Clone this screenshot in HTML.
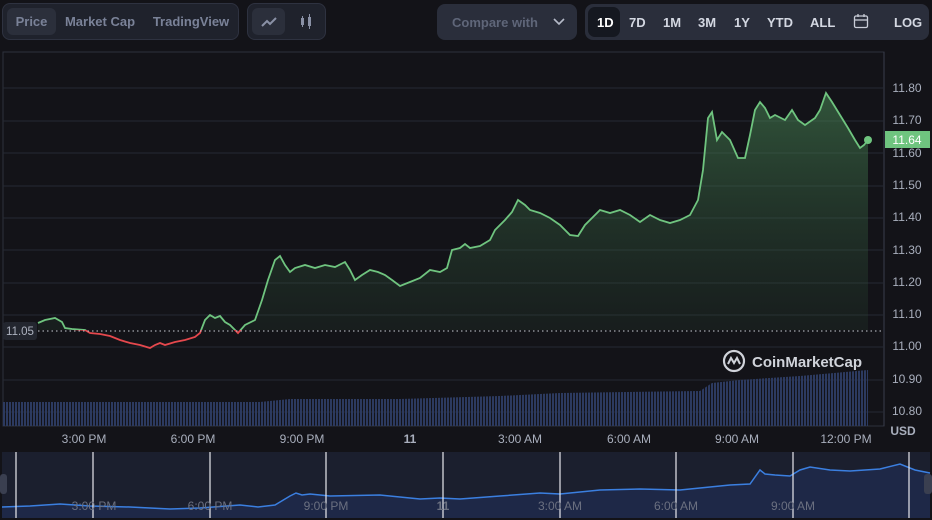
<!DOCTYPE html>
<html><head><meta charset="utf-8"><style>
body{margin:0;width:932px;height:520px;background:#131318;font-family:"Liberation Sans",sans-serif;overflow:hidden;position:relative;color:#a1a7bb}
.grp{position:absolute;top:3px;height:37px;border:1px solid #2e3240;border-radius:8px;background:#1f222c;box-sizing:border-box}
.btn{position:absolute;top:4px;height:27px;line-height:27px;font-size:13px;font-weight:600;color:#7a8298;text-align:center;border-radius:6px}
.on{background:#2b2f3b}
.tb{position:absolute;font-size:13px;font-weight:bold;color:#d4d8e2;top:15px}
</style></head><body>
<div class="grp" style="left:2px;width:237px">
 <div class="btn on" style="left:4px;width:49px">Price</div>
 <div class="btn" style="left:60px;width:74px">Market Cap</div>
 <div class="btn" style="left:148px;width:80px">TradingView</div>
</div>
<div class="grp" style="left:247px;width:79px">
 <div class="btn on" style="left:4px;width:33px"><svg width="33" height="27"><path d="M10 18l5-5 3 3 6-6" stroke="#8a91a6" stroke-width="2" fill="none"/></svg></div>
 <div class="btn" style="left:42px;width:33px"><svg width="33" height="27"><rect x="11" y="10" width="3" height="7" fill="#8a91a6"/><line x1="12.5" y1="8" x2="12.5" y2="19" stroke="#8a91a6"/><rect x="18" y="9" width="3" height="9" fill="#8a91a6"/><line x1="19.5" y1="6" x2="19.5" y2="21" stroke="#8a91a6"/></svg></div>
</div>
<div class="grp" style="left:437px;width:140px;border:none;background:#2a2e3b;top:4px;height:36px">
 <div style="position:absolute;left:15px;top:11px;font-size:13px;color:#5f6679;font-weight:bold">Compare with</div>
 <svg style="position:absolute;left:116px;top:13px" width="12" height="10"><path d="M1 2l5 5 5-5" stroke="#b5bac8" stroke-width="1.6" fill="none"/></svg>
</div>
<div class="grp" style="left:585px;width:344px;border:none;background:#2a2e3b;top:4px;height:36px">
 <div style="position:absolute;left:3px;top:3px;width:32px;height:30px;background:#151820;border-radius:7px"></div>
</div>
<div class="tb" style="left:597px;color:#fff">1D</div><div class="tb" style="left:629px">7D</div><div class="tb" style="left:663px">1M</div><div class="tb" style="left:698px">3M</div><div class="tb" style="left:734px">1Y</div><div class="tb" style="left:767px">YTD</div><div class="tb" style="left:810px">ALL</div>
<svg style="position:absolute;left:853px;top:13px" width="16" height="16"><rect x="1.5" y="3" width="13" height="11.5" rx="1.5" stroke="#c9cdd8" stroke-width="1.3" fill="none"/><line x1="1.5" y1="7" x2="14.5" y2="7" stroke="#c9cdd8" stroke-width="1.3"/><line x1="5" y1="1" x2="5" y2="4" stroke="#c9cdd8" stroke-width="1.3"/><line x1="11" y1="1" x2="11" y2="4" stroke="#c9cdd8" stroke-width="1.3"/></svg>
<div class="tb" style="left:894px">LOG</div>

<svg style="position:absolute;left:0;top:0" width="932" height="520">
<defs>
<linearGradient id="gf" x1="0" y1="0" x2="0" y2="1"><stop offset="0" stop-color="#4a8a57" stop-opacity="0.55"/><stop offset="1" stop-color="#2a4a33" stop-opacity="0.15"/></linearGradient>
<clipPath id="up"><rect x="0" y="0" width="932" height="330"/></clipPath>
<clipPath id="dn"><rect x="0" y="330" width="932" height="200"/></clipPath>
<pattern id="bars" width="3" height="10" patternUnits="userSpaceOnUse"><rect width="2" height="10" fill="#2c3a60"/></pattern>
</defs>
<rect x="3" y="52" width="881" height="374" fill="none" stroke="#2e313c"/>
<line x1="884" y1="52" x2="884" y2="426" stroke="#3a3e4c"/>
<g stroke="#262933">
<line x1="3" y1="88" x2="884" y2="88"/><line x1="3" y1="121" x2="884" y2="121"/><line x1="3" y1="153" x2="884" y2="153"/><line x1="3" y1="186" x2="884" y2="186"/><line x1="3" y1="218" x2="884" y2="218"/><line x1="3" y1="250" x2="884" y2="250"/><line x1="3" y1="283" x2="884" y2="283"/><line x1="3" y1="315" x2="884" y2="315"/><line x1="3" y1="347" x2="884" y2="347"/><line x1="3" y1="380" x2="884" y2="380"/><line x1="3" y1="412" x2="884" y2="412"/>
</g>
<path d="M3 402 L260 402 L290 399 L400 399 L500 396 L560 393 L700 391 L712 383 L740 380 L800 376 L868 370 L868 426 L3 426Z" fill="url(#bars)"/>
<path id="pl" d="M38 323L45 320L55 318L62 322L65 328L72 329L85 330L90 333L100 334L110 336L120 340L130 343L140 345L150 348L155 345L160 343L165 345L175 342L185 340L195 337L200 333L205 320L210 315L215 318L220 316L225 322L230 325L238 333L245 325L255 320L262 300L268 280L275 260L280 256L285 265L290 272L295 268L305 265L315 268L325 265L335 267L345 262L350 270L355 280L362 275L370 270L378 272L385 275L392 280L400 286L410 282L420 278L430 270L440 272L447 268L452 250L460 248L465 244L470 248L480 246L490 240L495 230L505 220L512 212L518 200L525 205L530 210L540 213L550 218L560 225L570 235L578 236L585 225L595 215L600 210L610 213L620 210L630 215L640 222L650 215L660 220L670 223L680 220L690 215L698 200L703 170L708 118L712 112L717 140L722 132L730 140L738 158L745 158L750 135L755 110L760 102L765 108L770 118L775 115L785 120L792 110L798 120L805 125L815 118L820 110L826 93L832 102L840 115L848 128L855 140L860 148L864 145L868 140" fill="none"/>
<path d="M38 323L45 320L55 318L62 322L65 328L72 329L85 330L90 333L100 334L110 336L120 340L130 343L140 345L150 348L155 345L160 343L165 345L175 342L185 340L195 337L200 333L205 320L210 315L215 318L220 316L225 322L230 325L238 333L245 325L255 320L262 300L268 280L275 260L280 256L285 265L290 272L295 268L305 265L315 268L325 265L335 267L345 262L350 270L355 280L362 275L370 270L378 272L385 275L392 280L400 286L410 282L420 278L430 270L440 272L447 268L452 250L460 248L465 244L470 248L480 246L490 240L495 230L505 220L512 212L518 200L525 205L530 210L540 213L550 218L560 225L570 235L578 236L585 225L595 215L600 210L610 213L620 210L630 215L640 222L650 215L660 220L670 223L680 220L690 215L698 200L703 170L708 118L712 112L717 140L722 132L730 140L738 158L745 158L750 135L755 110L760 102L765 108L770 118L775 115L785 120L792 110L798 120L805 125L815 118L820 110L826 93L832 102L840 115L848 128L855 140L860 148L864 145L868 140L868 330L38 330Z" fill="url(#gf)" clip-path="url(#up)"/>
<use href="#pl" stroke="#6fc47f" stroke-width="1.8" clip-path="url(#up)"/>
<use href="#pl" stroke="#e5484d" stroke-width="1.8" clip-path="url(#dn)"/>
<line x1="38" y1="331" x2="884" y2="331" stroke="#c9ccd4" stroke-dasharray="1.5 3"/>
<circle cx="868" cy="140" r="4" fill="#6fc47f"/>
<rect x="885" y="131" width="45" height="17" fill="#6fc47f"/>
<text x="907" y="144" font-size="12" fill="#fff" text-anchor="middle" font-family="Liberation Sans">11.64</text>
<rect x="3" y="322" width="34" height="18" rx="3" fill="#23262f"/>
<text x="20" y="335" font-size="11.5" fill="#aeb3c0" text-anchor="middle" font-family="Liberation Sans">11.05</text>
<g font-size="12" fill="#a9afbd" font-family="Liberation Sans" text-anchor="middle">
<text x="907" y="92">11.80</text><text x="907" y="124">11.70</text><text x="907" y="157">11.60</text><text x="907" y="189">11.50</text><text x="907" y="221">11.40</text><text x="907" y="254">11.30</text><text x="907" y="286">11.20</text><text x="907" y="318">11.10</text><text x="907" y="350">11.00</text><text x="907" y="383">10.90</text><text x="907" y="415">10.80</text>
<text x="903" y="435" font-weight="bold">USD</text>
<text x="84" y="443">3:00 PM</text><text x="193" y="443">6:00 PM</text><text x="302" y="443">9:00 PM</text><text x="410" y="443" font-weight="bold">11</text><text x="520" y="443">3:00 AM</text><text x="629" y="443">6:00 AM</text><text x="737" y="443">9:00 AM</text><text x="846" y="443">12:00 PM</text>
</g>
<circle cx="734" cy="361" r="10" fill="none" stroke="#d0d3da" stroke-width="2.2"/>
<path d="M728 364l3-6 3 5 3-5 3 6" stroke="#d0d3da" stroke-width="2" fill="none"/>
<text x="752" y="367" font-size="15" font-weight="bold" fill="#d0d3da" font-family="Liberation Sans">CoinMarketCap</text>
<rect x="2" y="452" width="928" height="66" fill="#1b1f2e"/>
<path d="M2 507L30 506L60 504L90 506L130 507L170 509L200 508L240 505L258 507L275 505L290 496L296 493L302 495L310 494L330 496L380 495L420 499L440 498L460 499L500 496L540 493L560 494L600 490L640 489L680 490L700 488L730 485L750 484L760 470L765 474L775 475L790 476L800 470L810 467L830 470L850 471L880 469L900 464L915 470L930 473L930 518L2 518Z" fill="#1e2847"/>
<path d="M2 507L30 506L60 504L90 506L130 507L170 509L200 508L240 505L258 507L275 505L290 496L296 493L302 495L310 494L330 496L380 495L420 499L440 498L460 499L500 496L540 493L560 494L600 490L640 489L680 490L700 488L730 485L750 484L760 470L765 474L775 475L790 476L800 470L810 467L830 470L850 471L880 469L900 464L915 470L930 473" fill="none" stroke="#3b7fe0" stroke-width="1.5"/>
<g stroke="#e8e8ee" stroke-width="1.2"><line x1="16" y1="452" x2="16" y2="518"/><line x1="93" y1="452" x2="93" y2="518"/><line x1="210" y1="452" x2="210" y2="518"/><line x1="326" y1="452" x2="326" y2="518"/><line x1="443" y1="452" x2="443" y2="518"/><line x1="560" y1="452" x2="560" y2="518"/><line x1="676" y1="452" x2="676" y2="518"/><line x1="793" y1="452" x2="793" y2="518"/><line x1="909" y1="452" x2="909" y2="518"/></g>
<g font-size="12" fill="#6b7080" font-family="Liberation Sans" text-anchor="middle">
<text x="94" y="510">3:00 PM</text><text x="210" y="510">6:00 PM</text><text x="326" y="510">9:00 PM</text><text x="443" y="510" font-weight="bold">11</text><text x="560" y="510">3:00 AM</text><text x="676" y="510">6:00 AM</text><text x="793" y="510">9:00 AM</text>
</g>
<rect x="0" y="474" width="7" height="20" rx="3" fill="#3a3f50"/><rect x="924" y="474" width="8" height="20" rx="3" fill="#3a3f50"/>
</svg>
</body></html>
